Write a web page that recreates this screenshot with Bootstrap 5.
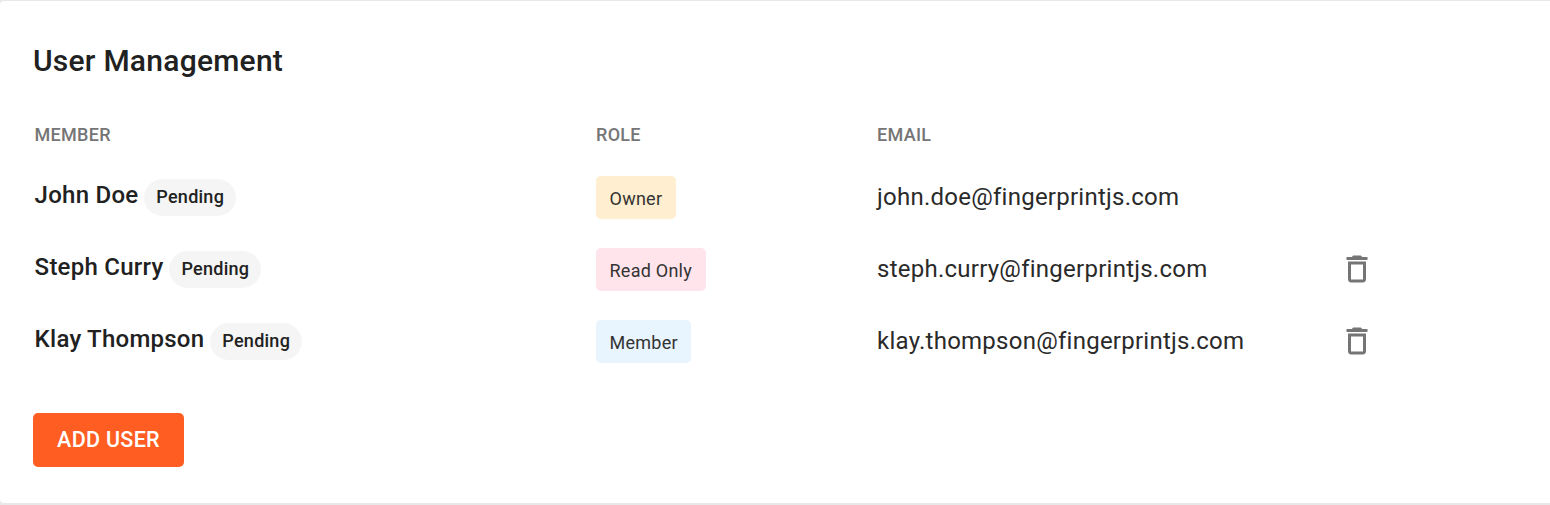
<!DOCTYPE html>
<html lang="en">
<head>
<meta charset="utf-8">
<title>User Management</title>
<link rel="stylesheet" href="https://cdn.jsdelivr.net/npm/bootstrap@5.3.0/dist/css/bootstrap.min.css">
<style>
body{font-family:Roboto,"Liberation Sans",sans-serif;color:#212121;background:#e8e8e8;height:505px;overflow:hidden}
.panel{height:502px;margin-top:1px;padding:0 33px;background:#fff;border-radius:4px 0 0 4px}
.title{font-size:30px;font-weight:500;line-height:40px;letter-spacing:.24px;margin:0;padding-top:40px}
.users{display:grid;grid-template-columns:562px 281px 466px 1fr;grid-template-rows:53px repeat(3,72px);margin:27px 0 0 1px;align-items:center}
.head{font-size:18px;font-weight:500;color:#757575;letter-spacing:.3px}
.head:first-child{padding-left:.5px}
.person{font-size:24px;font-weight:500;letter-spacing:.25px;line-height:32px;padding-left:.6px}
.pending{font-size:18px;font-weight:500;background:#f5f5f5;border-radius:19px;height:37px;line-height:36px;padding:0 12px;letter-spacing:.25px;margin-left:6px}
.role{font-size:18px;height:43px;line-height:45px;padding:0 13.5px;border-radius:5px;letter-spacing:.25px;display:block;width:max-content;color:#333}
.role-owner{background:#ffeecf}
.role-read{background:#ffe4ec}
.role-member{background:#e8f4fe}
.mail{font-size:24px;letter-spacing:.25px;color:#2a2a2a}
.trash{display:block;width:36px;height:36px;fill:#757575;margin-left:-4px}
.btn.add{width:151px;height:54px;background:#ff5d22;color:#fff;border:0;border-radius:5px;font-size:21.500px;font-weight:500;letter-spacing:.3px;line-height:54px;margin-top:36px;padding:0;display:block}
</style>
<script src="https://cdn.jsdelivr.net/npm/bootstrap@5.3.0/dist/js/bootstrap.bundle.min.js"></script>
</head>
<body>
<main class="panel">
<h1 class="title">User Management</h1>
<div class="users">
<div class="head">MEMBER</div><div class="head">ROLE</div><div class="head">EMAIL</div><div></div>

<div class="d-flex"><span class="person">John Doe</span><span class="pending">Pending</span></div>
<div><span class="role role-owner">Owner</span></div>
<div class="mail">john.doe@fingerprintjs.com</div>
<div></div>

<div class="d-flex"><span class="person">Steph Curry</span><span class="pending">Pending</span></div>
<div><span class="role role-read">Read Only</span></div>
<div class="mail">steph.curry@fingerprintjs.com</div>
<div><svg class="trash" viewBox="0 0 24 24" role="img" aria-label="Delete"><path d="M6 19c0 1.100.9 2 2 2h8c1.100 0 2-.9 2-2V7H6v12zM8 9h8v10H8V9zm7.500-5l-1-1h-5l-1 1H5v2h14V4z"/></svg></div>

<div class="d-flex"><span class="person">Klay Thompson</span><span class="pending">Pending</span></div>
<div><span class="role role-member">Member</span></div>
<div class="mail">klay.thompson@fingerprintjs.com</div>
<div><svg class="trash" viewBox="0 0 24 24" role="img" aria-label="Delete"><path d="M6 19c0 1.100.9 2 2 2h8c1.100 0 2-.9 2-2V7H6v12zM8 9h8v10H8V9zm7.500-5l-1-1h-5l-1 1H5v2h14V4z"/></svg></div>
</div>
<button type="button" class="btn add">ADD USER</button>
</main>
</body>
</html>
